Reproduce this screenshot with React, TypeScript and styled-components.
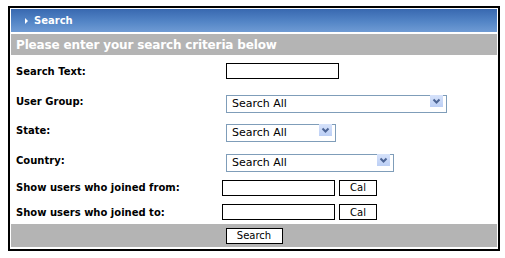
import { createGlobalStyle } from 'styled-components';
import styled from 'styled-components';

const GlobalStyle = createGlobalStyle`
  html, body {
    margin: 0;
    padding: 0;
    background: #ffffff;
  }
  body {
    font-family: "DejaVu Sans", Verdana, sans-serif;
  }
`;

const Panel = styled.div`
  box-sizing: border-box;
  width: 492px;
  margin: 6px 0 0 8px;
  border: 2px solid #000;
  padding: 1px 1px 2px 1px;
  background: #fff;
`;

const TitleBar = styled.div`
  height: 23px;
  display: flex;
  align-items: center;
  gap: 6px;
  padding-left: 14px;
  background: linear-gradient(to bottom, #3868b0 0%, #5385c6 55%, #6f9bd4 100%);
  color: #fff;
  font-size: 10px;
  font-weight: bold;
`;

const Arrow = styled.span`
  width: 0;
  height: 0;
  border-top: 3px solid transparent;
  border-bottom: 3px solid transparent;
  border-left: 3px solid #fff;
`;

const Heading = styled.div`
  margin-top: 2px;
  height: 21px;
  display: flex;
  align-items: center;
  padding-left: 5px;
  background: #b4b4b4;
  color: #fff;
  font-size: 12px;
  font-weight: bold;
  letter-spacing: -0.15px;
`;

const Form = styled.div`
  display: grid;
  grid-template-columns: 206px 1fr;
  grid-template-rows: 32px 28px 30px 30px 25px 24px;
  align-items: center;
  padding-left: 5px;
`;

const Label = styled.div`
  font-size: 10px;
  font-weight: bold;
  color: #000;
`;

const Field = styled.div<{ $indent?: number }>`
  display: flex;
  align-items: center;
  gap: 4px;
  padding-left: ${(p) => p.$indent ?? 0}px;
`;

const TextBox = styled.input`
  box-sizing: border-box;
  width: 113px;
  height: 16px;
  border: 1px solid #000;
  margin: 0;
  padding: 0 2px;
  font-family: inherit;
  font-size: 10px;
`;

const SelectWrap = styled.div<{ $w: number }>`
  position: relative;
  width: ${(p) => p.$w}px;
  height: 18px;
`;

const Select = styled.select`
  appearance: none;
  box-sizing: border-box;
  width: 100%;
  height: 100%;
  margin: 0;
  border: 1px solid #7f9db9;
  border-radius: 0;
  background: #fff;
  padding: 0 0 0 5px;
  font-family: inherit;
  font-size: 11px;
  color: #000;
`;

const DropButton = styled.span`
  position: absolute;
  right: 4px;
  top: 3px;
  width: 13px;
  height: 12px;
  background: linear-gradient(to bottom, #d6e2fa, #bccff5);
  display: flex;
  align-items: center;
  justify-content: center;
  pointer-events: none;
`;

const Button = styled.button<{ $w: number }>`
  box-sizing: border-box;
  width: ${(p) => p.$w}px;
  height: 16px;
  margin: 0;
  padding: 0;
  border: 1px solid #000;
  background: #fff;
  font-family: inherit;
  font-size: 10px;
  color: #000;
`;

const Footer = styled.div`
  height: 23px;
  display: flex;
  align-items: center;
  justify-content: center;
  background: #b4b4b4;
`;

function Dropdown({ width }: { width: number }) {
  return (
    <SelectWrap $w={width}>
      <Select defaultValue="all">
        <option value="all">Search All</option>
      </Select>
      <DropButton>
        <svg width="9" height="6" viewBox="0 0 9 6">
          <path d="M1.5 1.5 L4.5 4.5 L7.5 1.5" fill="none" stroke="#4d6595" strokeWidth="2" />
        </svg>
      </DropButton>
    </SelectWrap>
  );
}

export default function App() {
  return (
    <>
      <GlobalStyle />
      <Panel>
        <TitleBar>
          <Arrow />
          Search
        </TitleBar>
        <Heading>Please enter your search criteria below</Heading>
        <Form>
          <Label>Search Text:</Label>
          <Field $indent={4}>
            <TextBox type="text" />
          </Field>

          <Label>User Group:</Label>
          <Field $indent={4}>
            <Dropdown width={221} />
          </Field>

          <Label>State:</Label>
          <Field $indent={4}>
            <Dropdown width={110} />
          </Field>

          <Label>Country:</Label>
          <Field $indent={4}>
            <Dropdown width={168} />
          </Field>

          <Label>Show users who joined from:</Label>
          <Field>
            <TextBox type="text" />
            <Button $w={38}>Cal</Button>
          </Field>

          <Label>Show users who joined to:</Label>
          <Field>
            <TextBox type="text" />
            <Button $w={38}>Cal</Button>
          </Field>
        </Form>
        <Footer>
          <Button $w={57}>Search</Button>
        </Footer>
      </Panel>
    </>
  );
}
